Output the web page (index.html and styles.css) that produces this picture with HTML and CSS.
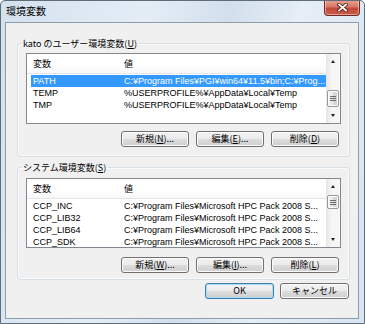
FILE: index.html
```html
<!DOCTYPE html>
<html lang="ja">
<head>
<meta charset="utf-8">
<title>環境変数</title>
<link rel="stylesheet" href="styles.css">
</head>
<body>
<div class="window">
  <div class="titlebar">
    <span class="title">環境変数</span>
    <div class="close">
      <svg width="11" height="9" viewBox="0 0 11 9">
        <path d="M2 1.5 L9 7.5 M9 1.5 L2 7.5" stroke="#5a1d16" stroke-width="3.6" stroke-linecap="square" fill="none"/>
        <path d="M2 1.5 L9 7.5 M9 1.5 L2 7.5" stroke="#ffffff" stroke-width="1.8" stroke-linecap="square" fill="none"/>
      </svg>
    </div>
  </div>
  <div class="client">
    <fieldset class="group g1">
      <legend>kato のユーザー環境変数(<u>U</u>)</legend>
      <div class="listview lv1">
        <div class="lv-main">
          <div class="lv-head"><span>変数</span><span>値</span></div>
          <div class="lv-row sel"><span>PATH</span><span>C:¥Program Files¥PGI¥win64¥11.5¥bin;C:¥Prog...</span></div>
          <div class="lv-row"><span>TEMP</span><span>%USERPROFILE%¥AppData¥Local¥Temp</span></div>
          <div class="lv-row"><span>TMP</span><span>%USERPROFILE%¥AppData¥Local¥Temp</span></div>
        </div>
        <div class="scrollbar sb1">
          <div class="arrow up"></div>
          <div class="track"><div class="thumb"><i></i><i></i><i></i></div></div>
          <div class="arrow down"></div>
        </div>
      </div>
      <div class="buttons">
        <button class="btn">新規(<u>N</u>)...</button>
        <button class="btn">編集(<u>E</u>)...</button>
        <button class="btn">削除(<u>D</u>)</button>
      </div>
    </fieldset>
    <fieldset class="group g2">
      <legend>システム環境変数(<u>S</u>)</legend>
      <div class="listview lv2">
        <div class="lv-main">
          <div class="lv-head"><span>変数</span><span>値</span></div>
          <div class="lv-row"><span>CCP_INC</span><span>C:¥Program Files¥Microsoft HPC Pack 2008 S...</span></div>
          <div class="lv-row"><span>CCP_LIB32</span><span>C:¥Program Files¥Microsoft HPC Pack 2008 S...</span></div>
          <div class="lv-row"><span>CCP_LIB64</span><span>C:¥Program Files¥Microsoft HPC Pack 2008 S...</span></div>
          <div class="lv-row"><span>CCP_SDK</span><span>C:¥Program Files¥Microsoft HPC Pack 2008 S...</span></div>
        </div>
        <div class="scrollbar sb2">
          <div class="arrow up"></div>
          <div class="track"><div class="thumb"><i></i><i></i><i></i></div></div>
          <div class="arrow down"></div>
        </div>
      </div>
      <div class="buttons">
        <button class="btn">新規(<u>W</u>)...</button>
        <button class="btn">編集(<u>I</u>)...</button>
        <button class="btn">削除(<u>L</u>)</button>
      </div>
    </fieldset>
    <div class="footer">
      <button class="btn default">OK</button>
      <button class="btn">キャンセル</button>
    </div>
  </div>
</div>
</body>
</html>
```
FILE: styles.css
```css
html, body {
  margin: 0;
  padding: 0;
  background: #ffffff;
}
.window {
  width: 365px;
  height: 324px;
  box-sizing: border-box;
  border: 1px solid #5f6c7a;
  border-radius: 5px 5px 0 0;
  background: linear-gradient(100deg, #d4e1ee 0%, #e4edf6 35%, #d2dfec 55%, #e6eef6 72%, #d8e4f0 100%);
  display: flex;
  flex-direction: column;
  font-family: "Noto Sans CJK JP", "Liberation Sans", sans-serif;
  color: #000;
  overflow: hidden;
}
.titlebar {
  height: 21px;
  flex: none;
  display: flex;
  justify-content: space-between;
  align-items: flex-start;
  padding-left: 5px;
}
.title {
  font-size: 10px;
  line-height: 20px;
}
.close {
  width: 36px;
  height: 16px;
  margin-top: -1px;
  margin-right: 4px;
  box-sizing: border-box;
  border: 1px solid #6e2a22;
  border-top: none;
  border-radius: 0 0 4px 4px;
  background: linear-gradient(#e9a393 0%, #d8786a 45%, #c24a3b 55%, #c85a48 100%);
  box-shadow: inset 0 0 0 1px rgba(255,220,210,0.55);
  display: flex;
  align-items: center;
  justify-content: center;
}
.client {
  flex: 1;
  margin: 0 5px 4px 4px;
  border: 1px solid #8f9cab;
  background: #f0f0f0;
  display: flex;
  flex-direction: column;
}
.group {
  margin: 0 8px 0 11px;
  padding: 3px 8px 9px 8px;
  border: 1px solid #d5dfe5;
  border-radius: 3px;
  box-shadow: inset 0 0 0 1px #fbfbfb;
  min-width: 0;
}
.g1 { margin-top: 14px; }
.g2 { margin-top: 4px; padding-top: 4px; padding-bottom: 6px; }
.group legend {
  font-size: 9px;
  line-height: 13px;
  height: 13px;
  padding: 0 2px;
  margin-left: -5px;
}
.listview {
  box-sizing: border-box;
  border: 1px solid #828790;
  background: #ffffff;
  display: flex;
  overflow: hidden;
}
.lv1 { height: 71px; }
.lv2 { height: 70px; }
.lv-main {
  flex: 1;
  min-width: 0;
  overflow: hidden;
}
.lv-head, .lv-row {
  display: grid;
  grid-template-columns: 91px 1fr;
  margin-left: 4px;
  white-space: nowrap;
}
.lv-head {
  height: 19px;
  margin-left: 0;
  padding-left: 4px;
  border-bottom: 1px solid #e5e5e5;
  background: linear-gradient(#ffffff, #ffffff 60%, #f7f8fa);
  font-size: 9px;
  line-height: 19px;
  margin-bottom: 1px;
}
.lv-head span, .lv-row span {
  padding-left: 2px;
  overflow: hidden;
}
.lv-row {
  height: 12px;
  font-family: "Liberation Sans", sans-serif;
  font-size: 9px;
  line-height: 12px;
}
.lv-row.sel {
  background: #3399ff;
  color: #ffffff;
}
.scrollbar {
  width: 14px;
  flex: none;
  display: flex;
  flex-direction: column;
  background: linear-gradient(to right, #e6e6e6, #f5f5f5 40%, #f8f8f8);
}
.arrow {
  height: 14px;
  flex: none;
  position: relative;
}
.arrow::after {
  content: "";
  position: absolute;
  left: 5px;
  top: 6px;
  border-left: 2.5px solid transparent;
  border-right: 2.5px solid transparent;
}
.arrow.up::after { border-bottom: 3px solid #222; }
.arrow.down::after { border-top: 3px solid #222; top: 5px; }
.track {
  flex: 1;
  display: flex;
  flex-direction: column;
}
.thumb {
  box-sizing: border-box;
  margin: 0 1px;
  border: 1px solid #999999;
  border-radius: 2px;
  background: linear-gradient(to right, #f3f3f3, #e9e9e9 50%, #d9d9d9 50%, #d0d0d0);
  box-shadow: inset 0 0 0 1px #fdfdfd;
  display: flex;
  flex-direction: column;
  justify-content: center;
  align-items: center;
  gap: 1px;
}
.thumb i {
  display: block;
  width: 6px;
  height: 1px;
  background: #6a6a6a;
}
.sb1 .thumb { height: 17px; margin-top: 22px; }
.sb2 .thumb { height: 14px; margin-top: 2px; }
.buttons {
  display: flex;
  justify-content: flex-end;
  gap: 7px;
  padding-right: 2px;
  margin-top: 7px;
}
.g2 .buttons { margin-top: 9px; }
.btn {
  width: 68px;
  height: 16px;
  box-sizing: border-box;
  padding: 0;
  margin: 0;
  border: 1px solid #707070;
  border-radius: 3px;
  background: linear-gradient(#f2f2f2 0%, #ebebeb 50%, #dddddd 50%, #cfcfcf 100%);
  box-shadow: inset 0 0 0 1px #fcfcfc;
  font-family: "Noto Sans CJK JP", "Liberation Sans", sans-serif;
  font-size: 9px;
  line-height: 14px;
  color: #000;
  text-align: center;
}
.footer {
  display: flex;
  justify-content: flex-end;
  gap: 6px;
  padding-right: 9px;
  margin-top: 3px;
}
.footer .btn { width: 69px; }
.btn.default {
  border-color: #3c7fb1;
  box-shadow: inset 0 0 0 1px #a9dcf2;
}
```
